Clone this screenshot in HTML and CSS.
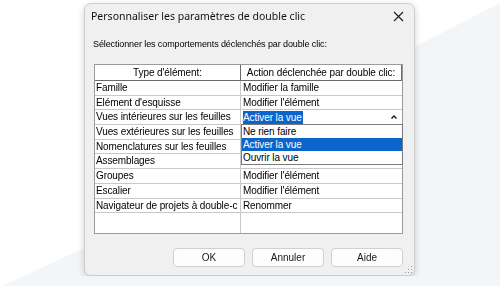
FILE: index.html
```html
<!DOCTYPE html>
<html lang="fr">
<head>
  <meta charset="UTF-8" />
  <title>Personnaliser les paramètres de double clic</title>
  <link rel="stylesheet" href="styles.css">
</head>
<body>
  <div class="backdrop"></div>

  <div class="dialog">
    <div class="titlebar">
      <span class="title">Personnaliser les paramètres de double clic</span>
      <svg class="close" width="11" height="11" viewBox="0 0 11 11">
        <path d="M1 1 L10 10 M10 1 L1 10" stroke="#1a1a1a" stroke-width="1.1" fill="none"/>
      </svg>
    </div>

    <p class="prompt">Sélectionner les comportements déclenchés par double clic:</p>

    <div class="grid">
      <div class="head">Type d'élément:</div>
      <div class="head">Action déclenchée par double clic:</div>

      <div class="cell">Famille</div>
      <div class="cell">Modifier la famille</div>

      <div class="cell">Elément d'esquisse</div>
      <div class="cell">Modifier l'élément</div>

      <div class="cell">Vues intérieures sur les feuilles</div>
      <div class="cell editing">
        <span class="picked">Activer la vue</span>
        <svg class="caret" width="6" height="4" viewBox="0 0 6 4">
          <path d="M0.5 3.5 L3 1 L5.5 3.5" stroke="#111" stroke-width="1.3" fill="none"/>
        </svg>
        <ul class="dropdown">
          <li>Ne rien faire</li>
          <li class="active">Activer la vue</li>
          <li>Ouvrir la vue</li>
        </ul>
      </div>

      <div class="cell">Vues extérieures sur les feuilles</div>
      <div class="cell"></div>

      <div class="cell">Nomenclatures sur les feuilles</div>
      <div class="cell"></div>

      <div class="cell">Assemblages</div>
      <div class="cell"></div>

      <div class="cell">Groupes</div>
      <div class="cell">Modifier l'élément</div>

      <div class="cell">Escalier</div>
      <div class="cell">Modifier l'élément</div>

      <div class="cell">Navigateur de projets à double-c</div>
      <div class="cell">Renommer</div>

      <div class="cell blank"></div>
      <div class="cell blank"></div>
    </div>

    <div class="buttons">
      <button>OK</button>
      <button>Annuler</button>
      <button>Aide</button>
    </div>

    <svg class="grip" width="9" height="9" viewBox="0 0 9 9">
      <rect x="7" y="1" width="1" height="1" fill="#9a9a9a"/>
      <rect x="4" y="4" width="1" height="1" fill="#9a9a9a"/>
      <rect x="7" y="4" width="1" height="1" fill="#9a9a9a"/>
      <rect x="1" y="7" width="1" height="1" fill="#9a9a9a"/>
      <rect x="4" y="7" width="1" height="1" fill="#9a9a9a"/>
      <rect x="7" y="7" width="1" height="1" fill="#9a9a9a"/>
    </svg>
  </div>
</body>
</html>
```

FILE: styles.css
```css
body {
  margin: 0;
  padding: 3px 0 0 84px;
  background: #ffffff;
  font-family: 'Liberation Sans', Arial, sans-serif;
  color: #000;
}

.backdrop {
  position: fixed;
  inset: 0;
  z-index: -1;
  background: #f3f6f9;
  clip-path: polygon(0 287px, 84px 248px, 418px 45px, 500px 3px, 500px 286px, 0 286px);
}

.dialog {
  position: relative;
  width: 331px;
  height: 273px;
  box-sizing: border-box;
  background: #f0f0f0;
  border: 1px solid #cdcdcd;
  border-radius: 7px;
  box-shadow: 0 2px 7px rgba(0,0,0,0.18);
}

.titlebar {
  height: 24px;
  display: flex;
  align-items: center;
  justify-content: space-between;
  padding: 0 10px 0 6px;
}

.title {
  font-family: 'Noto Sans', sans-serif;
  font-size: 10.5px;
  color: #111;
}

.close {
  display: block;
}

.prompt {
  margin: 9px 0 0 8px;
  font-size: 9px;
  letter-spacing: -0.1px;
  line-height: 14px;
}

.grid {
  margin: 13px 0 0 9px;
  width: 309px;
  height: 170px;
  box-sizing: border-box;
  border: 1px solid #9a9a9a;
  background: #fff;
  display: grid;
  grid-template-columns: 146px 1fr;
  grid-template-rows: 16px repeat(9, 14.7px) 1fr;
  font-size: 10px;
  letter-spacing: -0.1px;
}

.head {
  box-sizing: border-box;
  border-right: 1px solid #6a6a6a;
  border-bottom: 1px solid #6a6a6a;
  text-align: center;
  line-height: 15px;
  background: #fff;
}

.cell {
  box-sizing: border-box;
  border-right: 1px solid #c8c8c8;
  border-bottom: 1px solid #c8c8c8;
  padding-left: 1px;
  line-height: 14px;
  white-space: nowrap;
  overflow: hidden;
}

.cell:nth-child(even) {
  padding-left: 2px;
  border-right: none;
}

.cell.blank {
  border-bottom: none;
}

.editing {
  position: relative;
  overflow: visible;
  display: flex;
  align-items: center;
  justify-content: space-between;
  padding-right: 5px;
}

.picked {
  background: #0a64cc;
  color: #fff;
  line-height: 13px;
  padding-right: 1px;
}

.caret {
  display: block;
}

.dropdown {
  position: absolute;
  top: 100%;
  left: 0;
  right: -1px;
  height: 41px;
  box-sizing: border-box;
  margin: 0;
  padding: 0 0 2px;
  list-style: none;
  background: #fff;
  border: 1px solid #7a7a7a;
  z-index: 2;
}

.dropdown li {
  height: 13px;
  line-height: 13px;
  padding-left: 1px;
}

.dropdown li.active {
  background: #0a64cc;
  color: #fff;
}

.buttons {
  display: flex;
  justify-content: flex-end;
  gap: 7px;
  margin: 14px 11px 0 0;
}

.buttons button {
  width: 72px;
  height: 19px;
  padding: 0;
  background: #fdfdfd;
  border: 1px solid #d0d0d0;
  border-radius: 4px;
  font-family: 'Liberation Sans', Arial, sans-serif;
  font-size: 10px;
  color: #1a1a1a;
}

.grip {
  position: absolute;
  right: 1px;
  bottom: 1px;
}
```
